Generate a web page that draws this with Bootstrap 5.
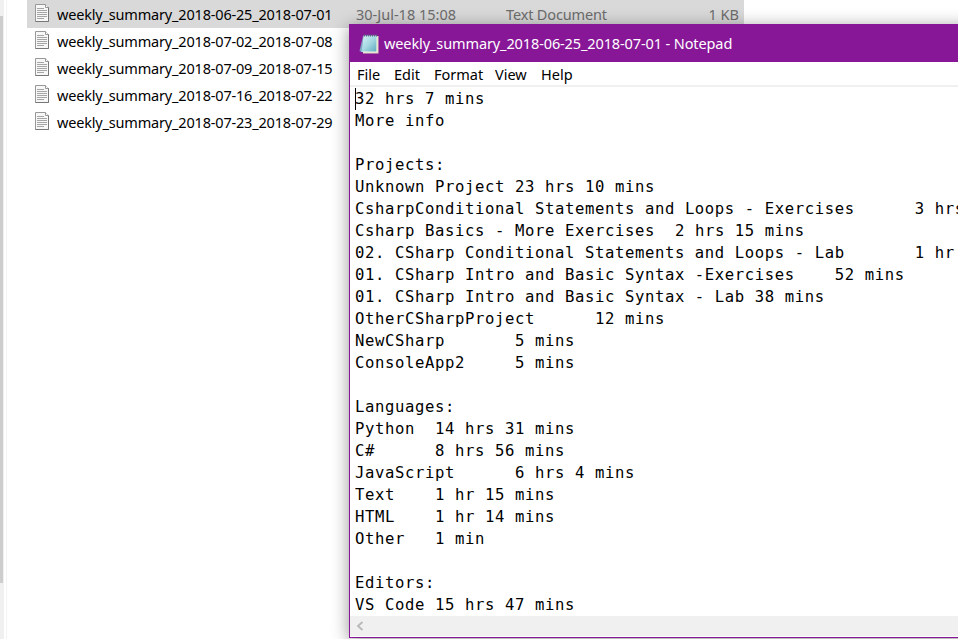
<!DOCTYPE html>
<html lang="en">
<head>
<meta charset="utf-8">
<meta name="viewport" content="width=device-width, initial-scale=1">
<title>weekly_summary - Notepad</title>
<link href="https://cdn.jsdelivr.net/npm/bootstrap@5.3.0/dist/css/bootstrap.min.css" rel="stylesheet">
<style>
body{width:958px;height:639px;font-family:"Noto Sans","Open Sans",sans-serif;font-size:14.5px;line-height:27px;color:#000;background:#fff}
.scroll-track{width:4px;background:#f0f0f0}
.scroll-thumb{width:3px;height:567px;margin-top:16px;background:#cdcdcd}
.pane-edge{width:1px;margin-left:2px;background:#f3f3f3}
.files{width:717px;margin-left:20px}
.file-row{height:27px}
.file-row.selected{height:28px;background:#d9d9d9}
.file-icon{width:16px;height:20px;margin:0 7px 3px 7px}
.file-row.selected .file-icon{margin-bottom:2px}
.file-name{width:299px;letter-spacing:-.18px}
.file-date{width:150px;color:#6d6d6d}
.file-type{width:180px;color:#6d6d6d;letter-spacing:-.15px}
.file-size{width:53px;color:#6d6d6d}
.notepad{left:349px;top:24px;width:640px;height:614px;border:1px solid #881798;background:#fff;box-shadow:0 3px 16px rgba(0,0,0,.42)}
.title-strip{height:37px;background:#881798;color:#fff;padding-left:9px}
.title-text{margin-left:5px;letter-spacing:-.11px}
.menu-strip{height:25px;padding-left:7px;border-bottom:2px solid #f0f0f0;line-height:24px}
.menu-file{width:37px}.menu-edit{width:40px}.menu-format{width:61px}.menu-view{width:46px}
.editor{height:529px;padding-left:5px}
.editor-text{font:15.6px/22px "DejaVu Sans Mono","Liberation Mono",monospace;letter-spacing:.608px;tab-size:8;padding-top:1px;color:#000;overflow:hidden}
.caret{left:5px;top:1px;width:1px;height:22px;background:#000}
.hscroll{height:20px;background:#f0f0f0;padding-left:6px}
</style>
</head>
<body class="position-relative overflow-hidden">
<svg class="d-none">
<symbol id="doc" viewBox="0 0 16 20"><path d="M1.500 1.500h10l3 3v14h-13z" fill="#f7f7f7" stroke="#989898"/><path d="M14.500 4v14.500h-13" fill="none" stroke="#777"/><path d="M11.500 1.500v3h3" fill="#fff" stroke="#999"/><path d="M3 5.500h7M3 7.500h10M3 9.500h10M3 11.500h10M3 13.500h10M3 15.500h7" stroke="#a5a5a5"/></symbol>
</svg>
<main class="d-flex h-100">
<div class="scroll-track"><div class="scroll-thumb"></div></div>
<div class="pane-edge"></div>
<div class="files text-nowrap">
<div class="file-row selected d-flex align-items-center"><svg class="file-icon"><use href="#doc"/></svg><span class="file-name">weekly_summary_2018-06-25_2018-07-01</span><span class="file-date">30-Jul-18 15:08</span><span class="file-type">Text Document</span><span class="file-size text-end">1 KB</span></div>
<div class="file-row d-flex align-items-center"><svg class="file-icon"><use href="#doc"/></svg><span class="file-name">weekly_summary_2018-07-02_2018-07-08</span></div>
<div class="file-row d-flex align-items-center"><svg class="file-icon"><use href="#doc"/></svg><span class="file-name">weekly_summary_2018-07-09_2018-07-15</span></div>
<div class="file-row d-flex align-items-center"><svg class="file-icon"><use href="#doc"/></svg><span class="file-name">weekly_summary_2018-07-16_2018-07-22</span></div>
<div class="file-row d-flex align-items-center"><svg class="file-icon"><use href="#doc"/></svg><span class="file-name">weekly_summary_2018-07-23_2018-07-29</span></div>
</div>
</main>
<section class="notepad position-absolute">
<header class="title-strip d-flex align-items-center text-nowrap">
<svg width="20" height="22" viewBox="0 0 20 22"><defs><linearGradient id="pad" x1="0" y1="0" x2="1" y2="1"><stop stop-color="#d6f3f7"/><stop offset=".5" stop-color="#a5d8e2"/><stop offset="1" stop-color="#5ba8bd"/></linearGradient></defs><path d="M4 3L.5 18l3 1.500z" fill="#7ba6c0"/><path d="M5 3h14.500v17.500H4z" fill="#d9d6bd"/><path d="M4.500 2.500h13.500l-.5 16.500H2.500z" fill="url(#pad)"/><path d="M18 3.500v15.500H4" fill="none" stroke="#f5f5e4"/><path d="M5.500 1.500v2M7.500 1.500v2M9.500 1.500v2M11.500 1.500v2M13.500 1.500v2M15.500 1.500v2M17.500 1.500v2" stroke="#52717a"/></svg>
<span class="title-text">weekly_summary_2018-06-25_2018-07-01 - Notepad</span>
</header>
<nav class="menu-strip d-flex"><span class="menu-file">File</span><span class="menu-edit">Edit</span><span class="menu-format">Format</span><span class="menu-view">View</span><span>Help</span></nav>
<div class="editor position-relative overflow-hidden"><span class="caret position-absolute"></span><pre class="editor-text m-0">32 hrs 7 mins
More info

Projects:
Unknown Project	23 hrs 10 mins
CsharpConditional Statements and Loops - Exercises	3 hrs
Csharp Basics - More Exercises	2 hrs 15 mins
02. CSharp Conditional Statements and Loops - Lab	1 hr
01. CSharp Intro and Basic Syntax -Exercises	52 mins
01. CSharp Intro and Basic Syntax - Lab	38 mins
OtherCSharpProject	12 mins
NewCSharp	5 mins
ConsoleApp2	5 mins

Languages:
Python	14 hrs 31 mins
C#	8 hrs 56 mins
JavaScript	6 hrs 4 mins
Text	1 hr 15 mins
HTML	1 hr 14 mins
Other	1 min

Editors:
VS Code	15 hrs 47 mins</pre></div>
<footer class="hscroll d-flex align-items-center"><svg width="8" height="10" viewBox="0 0 8 10"><path d="M6.500 1L2 5l4.500 4" fill="none" stroke="#b8b8b8" stroke-width="1.800"/></svg></footer>
</section>
<script src="https://cdn.jsdelivr.net/npm/bootstrap@5.3.0/dist/js/bootstrap.bundle.min.js"></script>
</body>
</html>
